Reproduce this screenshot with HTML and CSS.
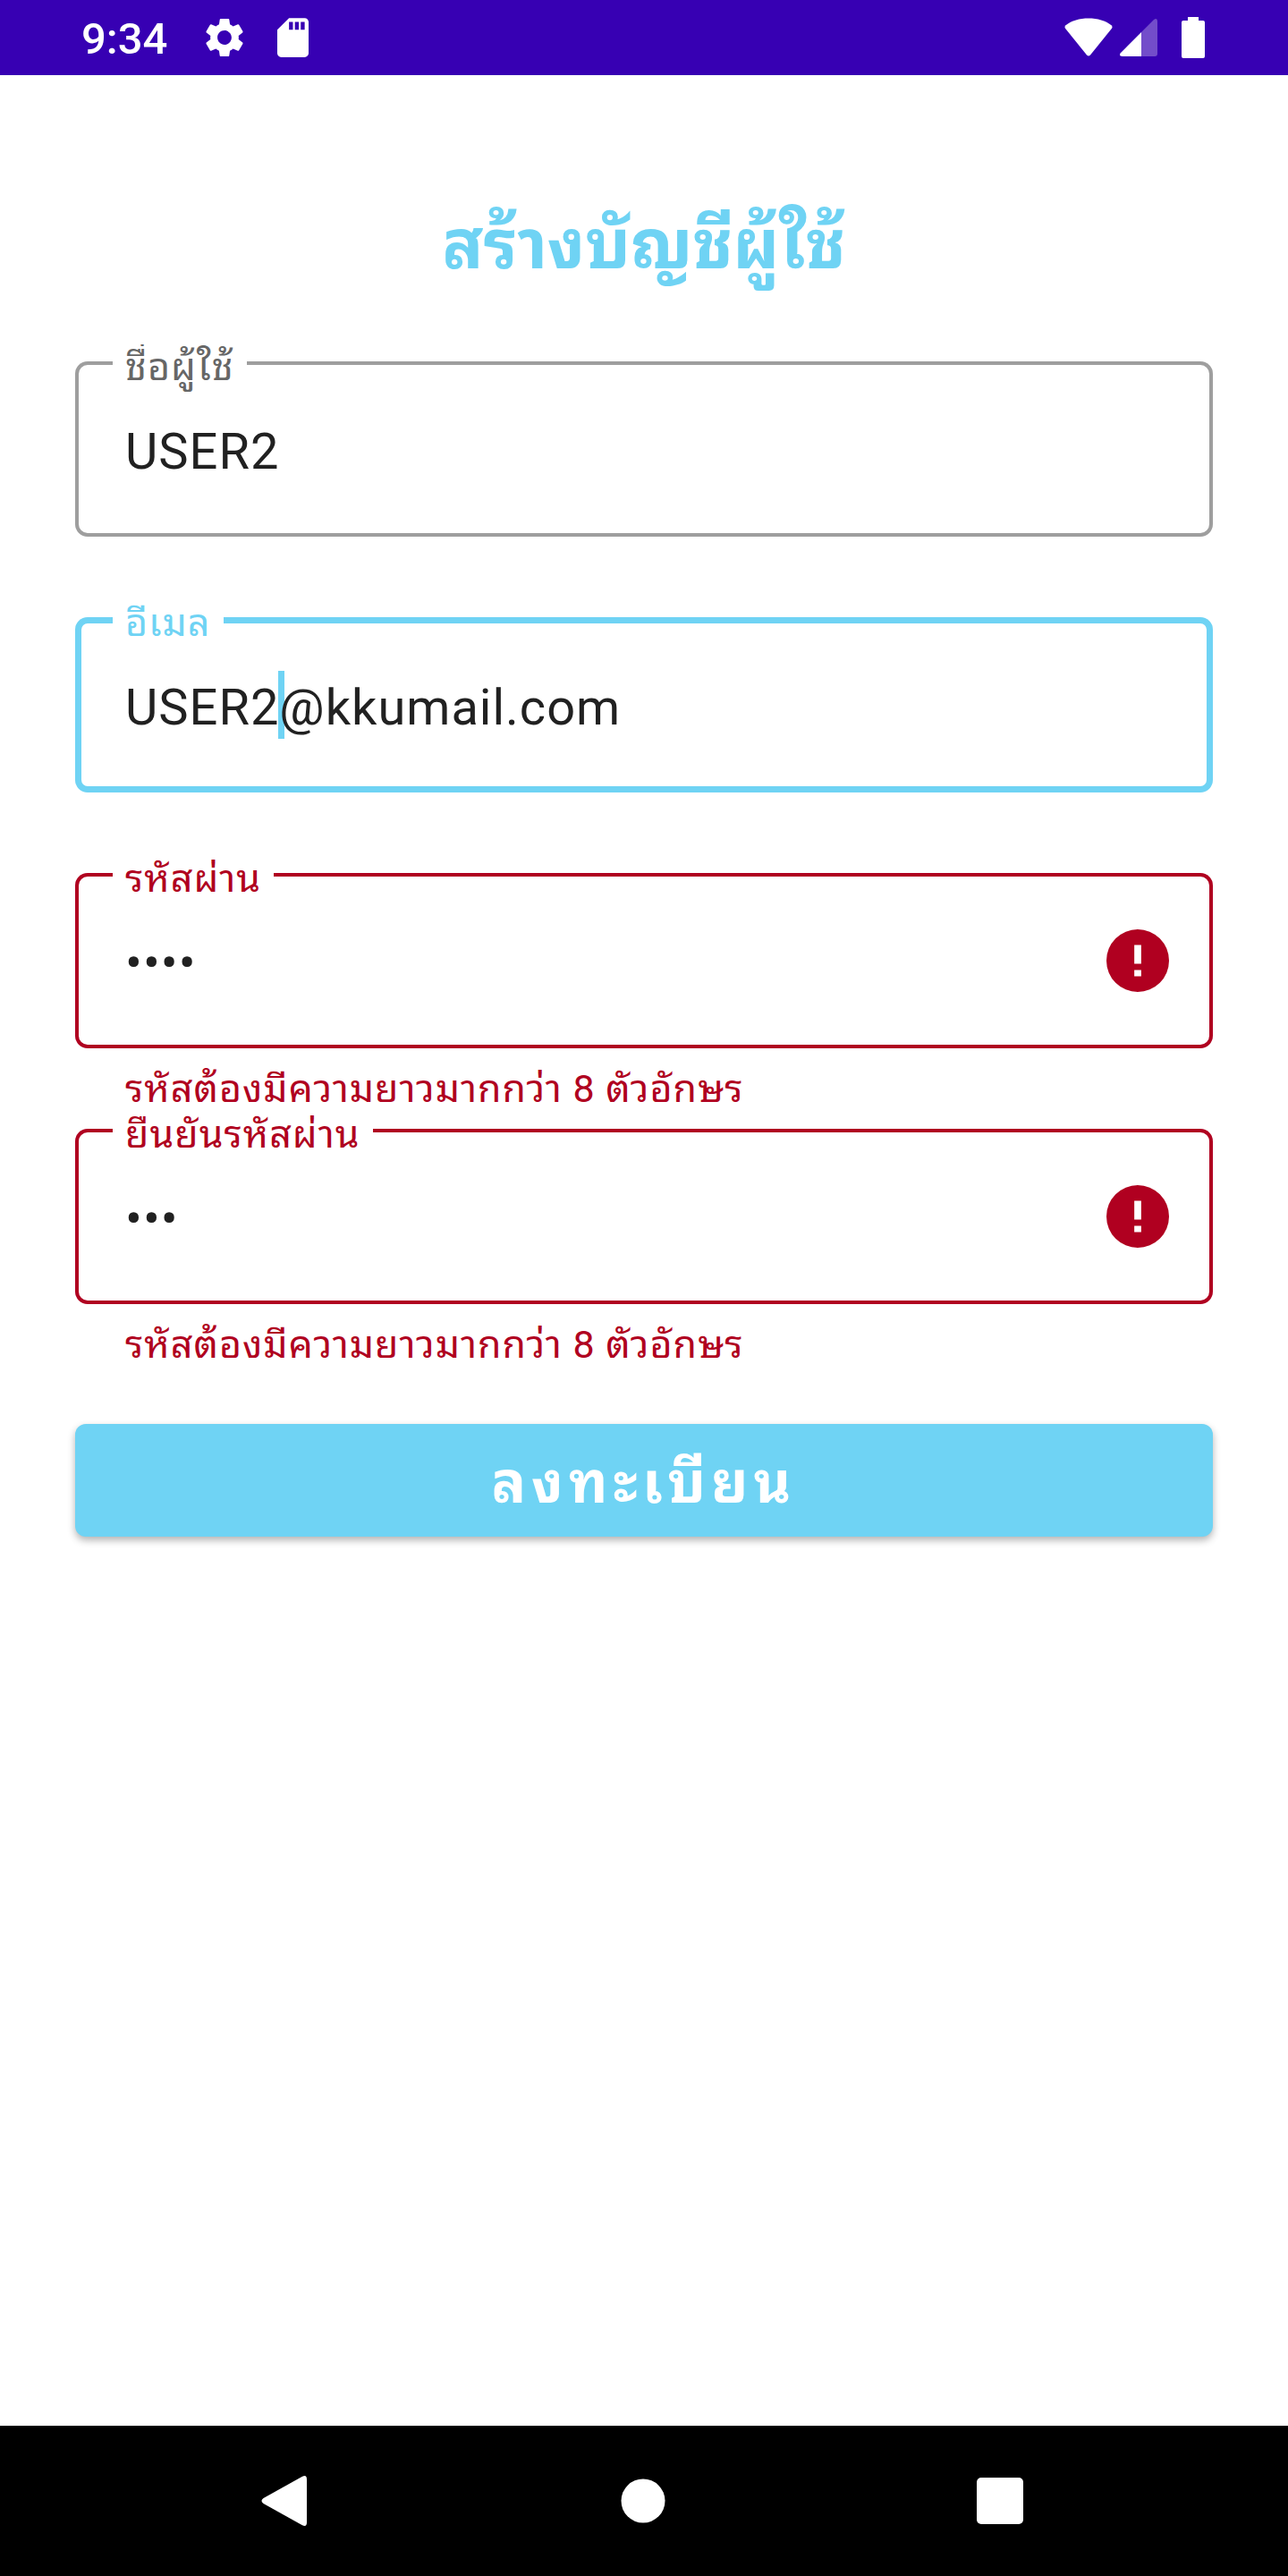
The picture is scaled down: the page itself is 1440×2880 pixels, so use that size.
FILE: index.html
```html
<!DOCTYPE html>
<html lang="th">
<head>
<meta charset="utf-8">
<meta name="viewport" content="width=device-width, initial-scale=1">
<title>สร้างบัญชีผู้ใช้</title>
<link rel="stylesheet" href="styles.css">
</head>
<body>
<header class="status-bar">
  <div class="status-group">
    <span class="clock">9:34</span>
    <svg class="status-icon gear" viewBox="2 2 20 20" aria-hidden="true"><path d="M19.14 12.94c.04-.3.06-.61.06-.94 0-.32-.02-.64-.07-.94l2.03-1.58c.18-.14.23-.41.12-.61l-1.92-3.32c-.12-.22-.37-.29-.59-.22l-2.39.96c-.5-.38-1.03-.7-1.62-.94l-.36-2.54c-.04-.24-.24-.41-.48-.41h-3.84c-.24 0-.43.17-.47.41l-.36 2.54c-.59.24-1.13.57-1.62.94l-2.39-.96c-.22-.08-.47 0-.59.22L2.74 8.87c-.12.21-.08.47.12.61l2.03 1.58c-.05.3-.09.63-.09.94s.02.64.07.94l-2.03 1.58c-.18.14-.23.41-.12.61l1.92 3.32c.12.22.37.29.59.22l2.39-.96c.5.38 1.03.7 1.62.94l.36 2.54c.05.24.24.41.48.41h3.84c.24 0 .44-.17.47-.41l.36-2.54c.59-.24 1.13-.56 1.62-.94l2.39.96c.22.08.47 0 .59-.22l1.92-3.32c.12-.22.07-.47-.12-.61l-2.01-1.58zM12 15.6c-1.98 0-3.6-1.62-3.6-3.6s1.62-3.6 3.6-3.6 3.6 1.62 3.6 3.6-1.62 3.6-3.6 3.6z"/></svg>
    <svg class="status-icon card" viewBox="4 2 16 20" aria-hidden="true"><path d="M18 2h-8L4 8v12c0 1.100.9 2 2 2h12c1.100 0 2-.9 2-2V4c0-1.100-.9-2-2-2zm-6 6h-2V4h2v4zm3 0h-2V4h2v4zm3 0h-2V4h2v4z"/></svg>
  </div>
  <div class="status-group signals">
    <svg class="status-icon wifi" viewBox="0 0 54 44" aria-hidden="true"><path d="M1.200 12Q-.4 10 1.500 8.300C8 3 17 .5 27 .5S46 3 52.500 8.300Q54.400 10 52.800 12L29 41.500Q27 43.500 25 41.500Z"/></svg>
    <svg class="status-icon cell" viewBox="0 0 42 42" aria-hidden="true"><path class="faint" d="M24 15L38 1Q42-1.500 42 3V39Q42 42 39 42H24Z"/><path d="M24 15V42H3Q-1.500 42 .8 38.200Z"/></svg>
    <svg class="status-icon battery" viewBox="0 0 26 46" aria-hidden="true"><path d="M7 0H19V4H24Q26 4 26 6V44Q26 46 24 46H2Q0 46 0 44V6Q0 4 2 4H7Z"/></svg>
  </div>
</header>

<main class="screen">
  <h1 class="title">สร้างบัญชีผู้ใช้</h1>
  <form class="form" novalidate>
    <div class="field">
      <div class="box">
        <label class="label" for="username">ชื่อผู้ใช้</label>
        <input class="input" id="username" type="text" value="USER2">
      </div>
    </div>
    <div class="field focused">
      <div class="box">
        <label class="label" for="email">อีเมล</label>
        <span class="caret"></span>
        <input class="input" id="email" type="text" inputmode="email" value="USER2@kkumail.com">
      </div>
    </div>
    <div class="field invalid">
      <div class="box">
        <label class="label" for="password">รหัสผ่าน</label>
        <input class="input" id="password" type="password" value="1234" aria-describedby="password-error">
        <svg class="error-icon" viewBox="2 2 20 20" aria-hidden="true"><path d="M12 2a10 10 0 1 0 0 20 10 10 0 0 0 0-20zm1.100 15h-2.200v-2h2.200zm0-4h-2.200V7h2.200z"/></svg>
      </div>
      <p class="helper" id="password-error">รหัสต้องมีความยาวมากกว่า 8 ตัวอักษร</p>
    </div>
    <div class="field invalid">
      <div class="box">
        <label class="label" for="confirm">ยืนยันรหัสผ่าน</label>
        <input class="input" id="confirm" type="password" value="123" aria-describedby="confirm-error">
        <svg class="error-icon" viewBox="2 2 20 20" aria-hidden="true"><path d="M12 2a10 10 0 1 0 0 20 10 10 0 0 0 0-20zm1.100 15h-2.200v-2h2.200zm0-4h-2.200V7h2.200z"/></svg>
      </div>
      <p class="helper" id="confirm-error">รหัสต้องมีความยาวมากกว่า 8 ตัวอักษร</p>
    </div>
    <button class="submit" type="submit">ลงทะเบียน</button>
  </form>
</main>

<nav class="nav-bar">
  <button class="nav-button" type="button" aria-label="Back"><svg class="nav-icon" viewBox="0 0 56 56" aria-hidden="true"><path d="M2.500 25L46 .8Q51-1.500 51 4V52Q51 57.500 46 55.200L2.500 31Q-1.500 28 2.500 25Z"/></svg></button>
  <button class="nav-button" type="button" aria-label="Home"><svg class="nav-icon" viewBox="0 0 56 56" aria-hidden="true"><circle cx="28" cy="28" r="24.500"/></svg></button>
  <button class="nav-button" type="button" aria-label="Recents"><svg class="nav-icon" viewBox="0 0 56 56" aria-hidden="true"><rect x="2" y="2" width="52" height="52" rx="5"/></svg></button>
</nav>
</body>
</html>
```
FILE: styles.css
```css
* {
  box-sizing: border-box;
}

body {
  --accent: #6fd3f4;
  --error: #b00020;
  margin: 0;
  min-height: 100vh;
  display: flex;
  flex-direction: column;
  background: #fff;
  color: #212121;
  font-family: Roboto, "Noto Sans Thai Looped", "Noto Sans", sans-serif;
}

/* Status bar */
.status-bar {
  display: flex;
  align-items: center;
  justify-content: space-between;
  height: 84px;
  padding: 0 93px 0 91px;
  background: #3700b3;
  color: #fff;
}

.status-group {
  display: flex;
  align-items: center;
}

.signals {
  gap: 8px;
}

.clock {
  margin-right: 42px;
  padding-top: 4px;
  font-size: 49px;
  font-weight: 500;
  line-height: 80px;
}

.status-icon {
  fill: #fff;
}

.gear {
  width: 44px;
  height: 44px;
  margin-right: 37px;
}

.card {
  width: 35px;
  height: 44px;
}

.wifi {
  width: 54px;
  height: 44px;
}

.cell {
  width: 42px;
  height: 42px;
}

.faint {
  opacity: 0.3;
}

.battery {
  width: 26px;
  height: 46px;
  margin-left: 19px;
}

/* Form */
.screen {
  flex: 1;
  padding: 140px 84px 84px;
}

.title {
  margin: 0 0 80px;
  color: var(--accent);
  font-size: 76px;
  font-weight: 700;
  line-height: 100px;
  text-align: center;
}

.form {
  display: flex;
  flex-direction: column;
}

.field {
  --line: #9e9e9e;
  --label: #666;
  height: 286px;
}

.focused {
  --line: var(--accent);
  --label: var(--accent);
}

.invalid {
  --line: var(--error);
  --label: var(--error);
}

.box {
  position: relative;
  display: flex;
  align-items: center;
  height: 196px;
  padding: 0 49px 0 56px;
  border-radius: 14px;
  box-shadow: inset 0 0 0 4px var(--line);
}

.focused .box {
  box-shadow: inset 0 0 0 7px var(--line);
}

.label {
  position: absolute;
  top: -19px;
  left: 42px;
  height: 56px;
  padding: 0 14px;
  overflow: hidden;
  background: #fff;
  color: var(--label);
  font-size: 43px;
  letter-spacing: 1px;
  line-height: 50px;
  white-space: nowrap;
}

.input {
  position: relative;
  flex: 1;
  min-width: 0;
  height: 80px;
  padding: 6px 0 0;
  border: 0;
  outline: 0;
  background: transparent;
  color: inherit;
  font-family: inherit;
  font-size: 56px;
  letter-spacing: 1px;
}

.caret {
  position: absolute;
  top: 60px;
  left: 227px;
  width: 7px;
  height: 76px;
  background: var(--accent);
}

.error-icon {
  width: 70px;
  height: 70px;
  fill: var(--error);
}

.helper {
  margin: 0;
  padding: 20px 56px 0;
  color: var(--error);
  font-size: 43px;
  letter-spacing: 1px;
  line-height: 50px;
}

.submit {
  height: 126px;
  margin-top: 44px;
  padding: 0 0 8px;
  border: 0;
  border-radius: 12px;
  background: var(--accent);
  box-shadow: 0 4px 8px rgba(0, 0, 0, 0.3);
  color: #fff;
  font-family: inherit;
  font-size: 64px;
  font-weight: 700;
  letter-spacing: 6px;
}

/* System navigation */
.nav-bar {
  display: flex;
  justify-content: space-between;
  height: 168px;
  padding: 0 268px 0 266px;
  background: #000;
}

.nav-button {
  display: flex;
  align-items: center;
  justify-content: center;
  width: 108px;
  padding: 0;
  border: 0;
  background: none;
}

.nav-icon {
  width: 56px;
  height: 56px;
  fill: #fff;
}
```
